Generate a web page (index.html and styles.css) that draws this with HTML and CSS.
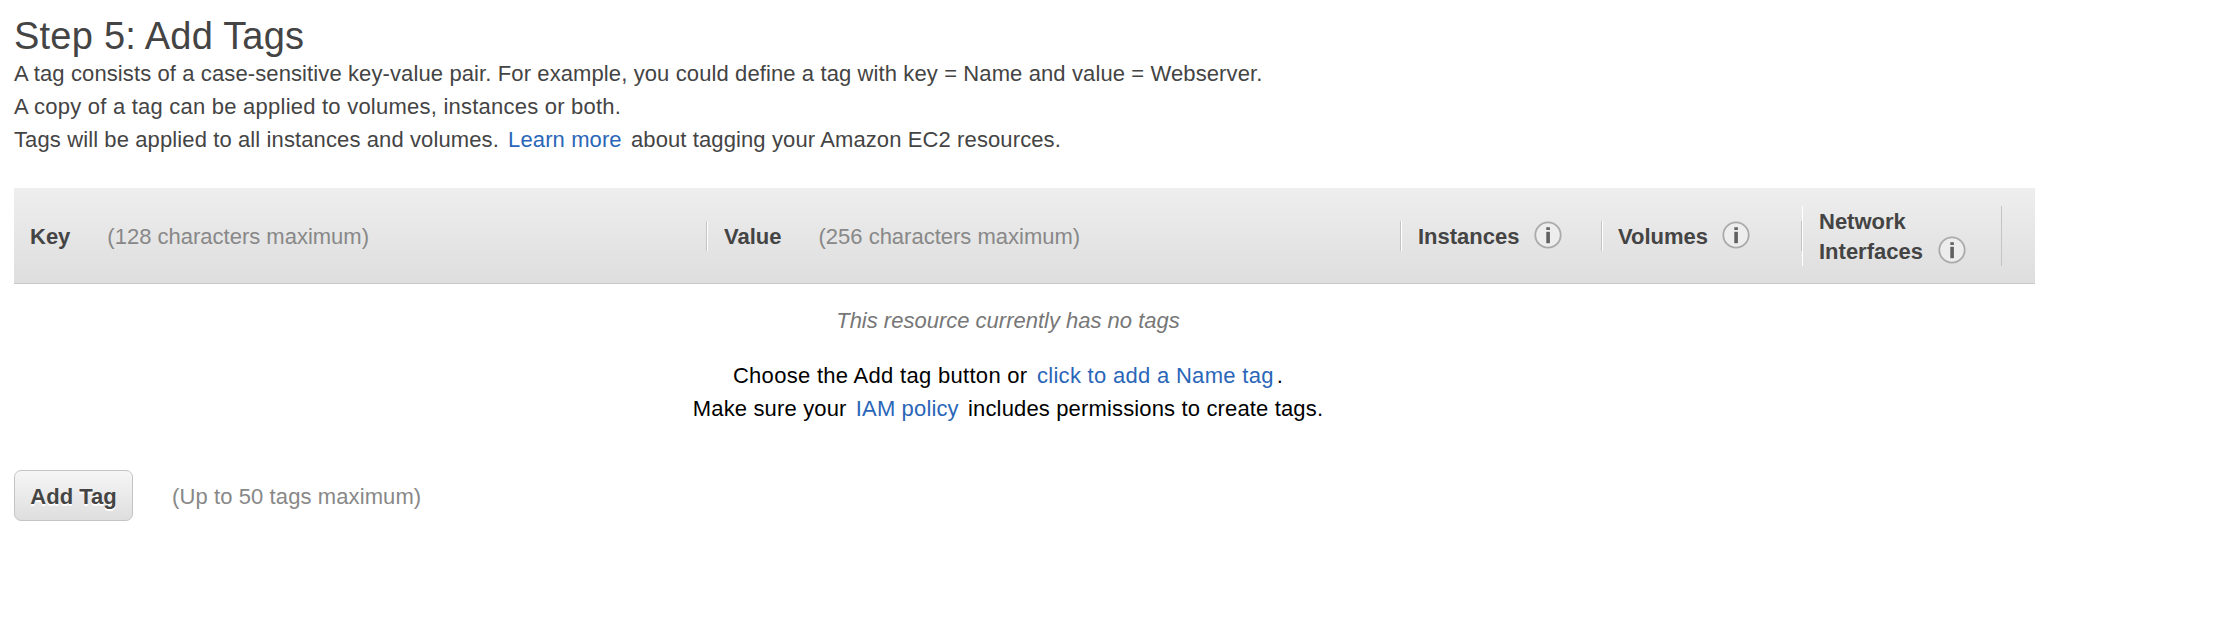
FILE: index.html
```html
<!DOCTYPE html>
<html lang="en">
<head>
<meta charset="utf-8">
<title>Step 5: Add Tags</title>
<link rel="stylesheet" href="styles.css">
</head>
<body>
<svg class="defs" width="0" height="0">
  <symbol id="info" viewBox="0 0 28 28">
    <circle cx="14" cy="14" r="12.7" fill="#ededed" stroke="#aaa" stroke-width="1.8"/>
    <rect x="12.3" y="6.2" width="3.6" height="2.8" fill="#666"/>
    <rect x="12.3" y="10.8" width="3.6" height="11.4" fill="#606060"/>
  </symbol>
</svg>
<main class="page">
  <h1 class="title">Step 5: Add Tags</h1>
  <div class="intro">
    <p class="snug">A tag consists of a case-sensitive key-value pair. For example, you could define a tag with key = Name and value = Webserver.</p>
    <p class="loose">A copy of a tag can be applied to volumes, instances or both.</p>
    <p class="snug">Tags will be applied to all instances and volumes. <a class="link">Learn more</a> about tagging your Amazon EC2 resources.</p>
  </div>
  <div class="table-head">
    <div class="cell first"><div class="label"><b>Key</b><span class="hint key-hint">(128 characters maximum)</span></div></div>
    <div class="cell"><div class="label"><b>Value</b><span class="hint">(256 characters maximum)</span></div></div>
    <div class="cell"><div class="label"><b>Instances</b><svg class="info"><use href="#info"/></svg></div></div>
    <div class="cell"><div class="label volumes"><b>Volumes</b><svg class="info"><use href="#info"/></svg></div></div>
    <div class="cell"><div class="label tall"><b>Network<br>Interfaces</b><svg class="info low"><use href="#info"/></svg></div></div>
  </div>
  <div class="empty">
    <p class="none">This resource currently has no tags</p>
    <p class="wide">Choose the Add tag button or <a class="link">click to add a Name tag</a>.</p>
    <p class="policy">Make sure your <a class="link">IAM policy</a> includes permissions to create tags.</p>
  </div>
  <div class="actions">
    <button class="add">Add Tag</button>
    <span class="hint limit">(Up to 50 tags maximum)</span>
  </div>
</main>
</body>
</html>
```
FILE: styles.css
```css
* { box-sizing: border-box; }
body { margin: 0; background: #fff; color: #444; font: 22px/33px "Liberation Sans", Arial, sans-serif; }
p, h1 { margin: 0; }
.defs { display: block; height: 0; }
.page { width: 2035px; padding: 15px 0 0 14px; }
.title { font-size: 38px; font-weight: 400; line-height: 42px; letter-spacing: .23px; white-space: nowrap; }
.intro { white-space: nowrap; }
.snug { letter-spacing: .11px; }
.loose { letter-spacing: .23px; }
.wide { letter-spacing: .3px; }
.policy { letter-spacing: .15px; }
.link { color: #2a66b8; padding: 0 3px; }
.table-head {
  display: grid; grid-template-columns: 693px 694px 201px 200px 200px; align-items: center;
  height: 96px; margin-top: 32px; line-height: 30px;
  background: linear-gradient(#eee, #dedede); border-bottom: 1px solid #c8c8c8;
}
.label { display: flex; align-items: center; height: 30px; padding-left: 16px; border-left: 1px solid #fff; border-right: 1px solid #c4c4c4; white-space: nowrap; }
.label b, .label .hint { padding-top: 2px; }
.first .label { border-left-color: transparent; padding-left: 15px; }
.volumes { padding-left: 15px; }
.tall { height: 60px; }
.hint { color: #888; margin-left: 37px; }
.info { width: 28px; height: 28px; margin: 0 0 1px 14px; }
.low { align-self: flex-end; margin: 0 0 2px 15px; }
.empty { width: 1988px; margin-top: 20px; text-align: center; color: #000; }
.none { font-style: italic; color: #777; margin-bottom: 22px; }
.actions { display: flex; align-items: center; margin-top: 45px; }
.add {
  width: 119px; height: 51px; padding: 2px 0 0; border: 1px solid #c4c4c4; border-radius: 7px;
  background: linear-gradient(#f6f6f6, #dedede); color: #444;
  font: bold 22px/30px "Liberation Sans", Arial, sans-serif; text-shadow: 0 2px 0 #fff; white-space: nowrap;
}
.limit { margin-left: 39px; padding-top: 1px; letter-spacing: .1px; }
```
